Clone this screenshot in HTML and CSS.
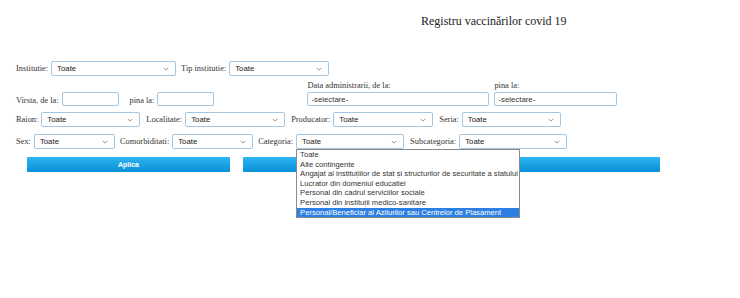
FILE: index.html
```html
<!DOCTYPE html>
<html lang="ro">
<head>
  <meta charset="UTF-8">
  <meta name="viewport" content="width=device-width, initial-scale=1">
  <title>Registru vaccinărilor covid 19</title>
  <link rel="stylesheet" href="styles.css">
</head>
<body>

  <h1 class="titlu">Registru vaccinărilor covid 19</h1>

  <form class="filtre">
    <div class="rand rand-1">
      <label>Institutie:</label>
      <span class="sel w-125"><span>Toate</span><svg viewBox="0 0 8 5"><path d="M1 1l3 3 3-3"/></svg></span>
      <label>Tip institutie:</label>
      <span class="sel w-100"><span>Toate</span><svg viewBox="0 0 8 5"><path d="M1 1l3 3 3-3"/></svg></span>
    </div>

    <div class="rand rand-2">
      <label>Virsta, de la:</label>
      <input type="text" class="inp w-57">
      <label class="pina">pina la:</label>
      <input type="text" class="inp w-57">
      <div class="bloc-data data-de">
        <label>Data administrarii, de la:</label>
        <input type="text" class="inp w-182" value="-selectare-">
      </div>
      <div class="bloc-data data-pina">
        <label>pina la:</label>
        <input type="text" class="inp w-123" value="-selectare-">
      </div>
    </div>

    <div class="rand rand-3">
      <label>Raion:</label>
      <span class="sel w-99"><span>Toate</span><svg viewBox="0 0 8 5"><path d="M1 1l3 3 3-3"/></svg></span>
      <label>Localitate:</label>
      <span class="sel w-100"><span>Toate</span><svg viewBox="0 0 8 5"><path d="M1 1l3 3 3-3"/></svg></span>
      <label>Producator:</label>
      <span class="sel w-100"><span>Toate</span><svg viewBox="0 0 8 5"><path d="M1 1l3 3 3-3"/></svg></span>
      <label>Seria:</label>
      <span class="sel w-99"><span>Toate</span><svg viewBox="0 0 8 5"><path d="M1 1l3 3 3-3"/></svg></span>
    </div>

    <div class="rand rand-4">
      <label>Sex:</label>
      <span class="sel w-81"><span>Toate</span><svg viewBox="0 0 8 5"><path d="M1 1l3 3 3-3"/></svg></span>
      <label>Comorbiditati:</label>
      <span class="sel w-81"><span>Toate</span><svg viewBox="0 0 8 5"><path d="M1 1l3 3 3-3"/></svg></span>
      <label>Categoria:</label>
      <div class="sel-wrap">
        <span class="sel w-108"><span>Toate</span><svg viewBox="0 0 8 5"><path d="M1 1l3 3 3-3"/></svg></span>
        <ul class="lista">
          <li>Toate</li>
          <li>Alte contingente</li>
          <li>Angajat al instituțiilor de stat și structurilor de securitate a statului</li>
          <li>Lucrator din domeniul educatiei</li>
          <li>Personal din cadrul serviciilor sociale</li>
          <li>Personal din instituții medico-sanitare</li>
          <li class="activ">Personal/Beneficiar al Azilurilor sau Centrelor de Plasament</li>
        </ul>
      </div>
      <label>Subcategoria:</label>
      <span class="sel w-108"><span>Toate</span><svg viewBox="0 0 8 5"><path d="M1 1l3 3 3-3"/></svg></span>
    </div>

    <div class="butoane">
      <button type="button" class="btn btn-aplica">Aplica</button>
      <button type="button" class="btn btn-reset">reseteaza filtrele</button>
    </div>
  </form>

</body>
</html>
```

FILE: styles.css
```css
body {
  margin: 0;
  padding: 0;
  min-height: 100vh;
  font-family: "Liberation Serif", "Times New Roman", serif;
  color: #222;
  background: #fff;
}

.titlu {
  margin: 0;
  padding: 14px 0 0 421px;
  font-size: 12px;
  font-weight: normal;
  line-height: 14px;
  color: #222;
}

.filtre {
  padding: 33px 0 120px 16px;
}

.rand {
  display: flex;
  align-items: center;
  font-size: 8.4px;
  line-height: 11px;
  color: #333;
}
.rand label {
  margin-right: 3px;
  white-space: nowrap;
}
.rand .sel {
  margin-right: 5px;
}

.rand-2 {
  align-items: flex-end;
  margin-top: 4px;
}
.rand-2 .pina {
  margin-left: 11px;
}
.rand-3 {
  margin-top: 6px;
}
.rand-3 .sel {
  margin-right: 6px;
}
.rand-4 {
  margin-top: 7px;
}

.sel {
  display: flex;
  align-items: center;
  justify-content: space-between;
  box-sizing: border-box;
  height: 15px;
  padding: 0 6px 0 5px;
  border: 1px solid #a3c6e2;
  border-radius: 2px;
  background: #fff;
  font-family: "Liberation Sans", Arial, sans-serif;
  font-size: 7.8px;
  color: #222;
}
.sel svg {
  width: 6px;
  height: 4px;
  fill: none;
  stroke: #888;
  stroke-width: 1.2;
}

.inp {
  box-sizing: border-box;
  height: 14px;
  padding: 0 0 0 3px;
  border: 1px solid #a3c6e2;
  border-radius: 2px;
  font-family: "Liberation Sans", Arial, sans-serif;
  font-size: 7.8px;
  color: #333;
  outline: none;
}

.w-57 { width: 57px; }
.w-81 { width: 81px; }
.w-99 { width: 99px; }
.w-100 { width: 100px; }
.w-108 { width: 108px; }
.w-123 { width: 123px; }
.w-125 { width: 125px; }
.w-182 { width: 182px; }

.bloc-data {
  display: flex;
  flex-direction: column;
}
.bloc-data label {
  margin: 0 0 1px;
}
.data-de {
  margin-left: 93px;
}
.data-pina {
  margin-left: 5px;
}

.sel-wrap {
  position: relative;
  margin-right: 6px;
}
.sel-wrap .sel {
  margin-right: 0;
}

.lista {
  position: absolute;
  top: 15px;
  left: 0;
  z-index: 10;
  margin: 0;
  padding: 0;
  list-style: none;
  width: 224px;
  box-sizing: border-box;
  border: 1px solid #8a8a8a;
  background: #fff;
  font-family: "Liberation Sans", Arial, sans-serif;
  font-size: 7.6px;
  line-height: 9.6px;
  color: #333;
}
.lista li {
  padding: 0 3px;
  white-space: nowrap;
}
.lista .activ {
  background: #2d80e3;
  color: #fff;
}

.butoane {
  display: flex;
  gap: 13px;
  margin: 8px 0 0 11px;
}
.btn {
  height: 15px;
  padding: 0;
  border: none;
  border-radius: 1px;
  background: linear-gradient(#2cb4f2, #0b8fd8);
  color: #fff;
  font-family: "Liberation Sans", Arial, sans-serif;
  font-size: 7px;
  font-weight: bold;
  cursor: pointer;
}
.btn-aplica {
  width: 203px;
}
.btn-reset {
  width: 417px;
}
```
